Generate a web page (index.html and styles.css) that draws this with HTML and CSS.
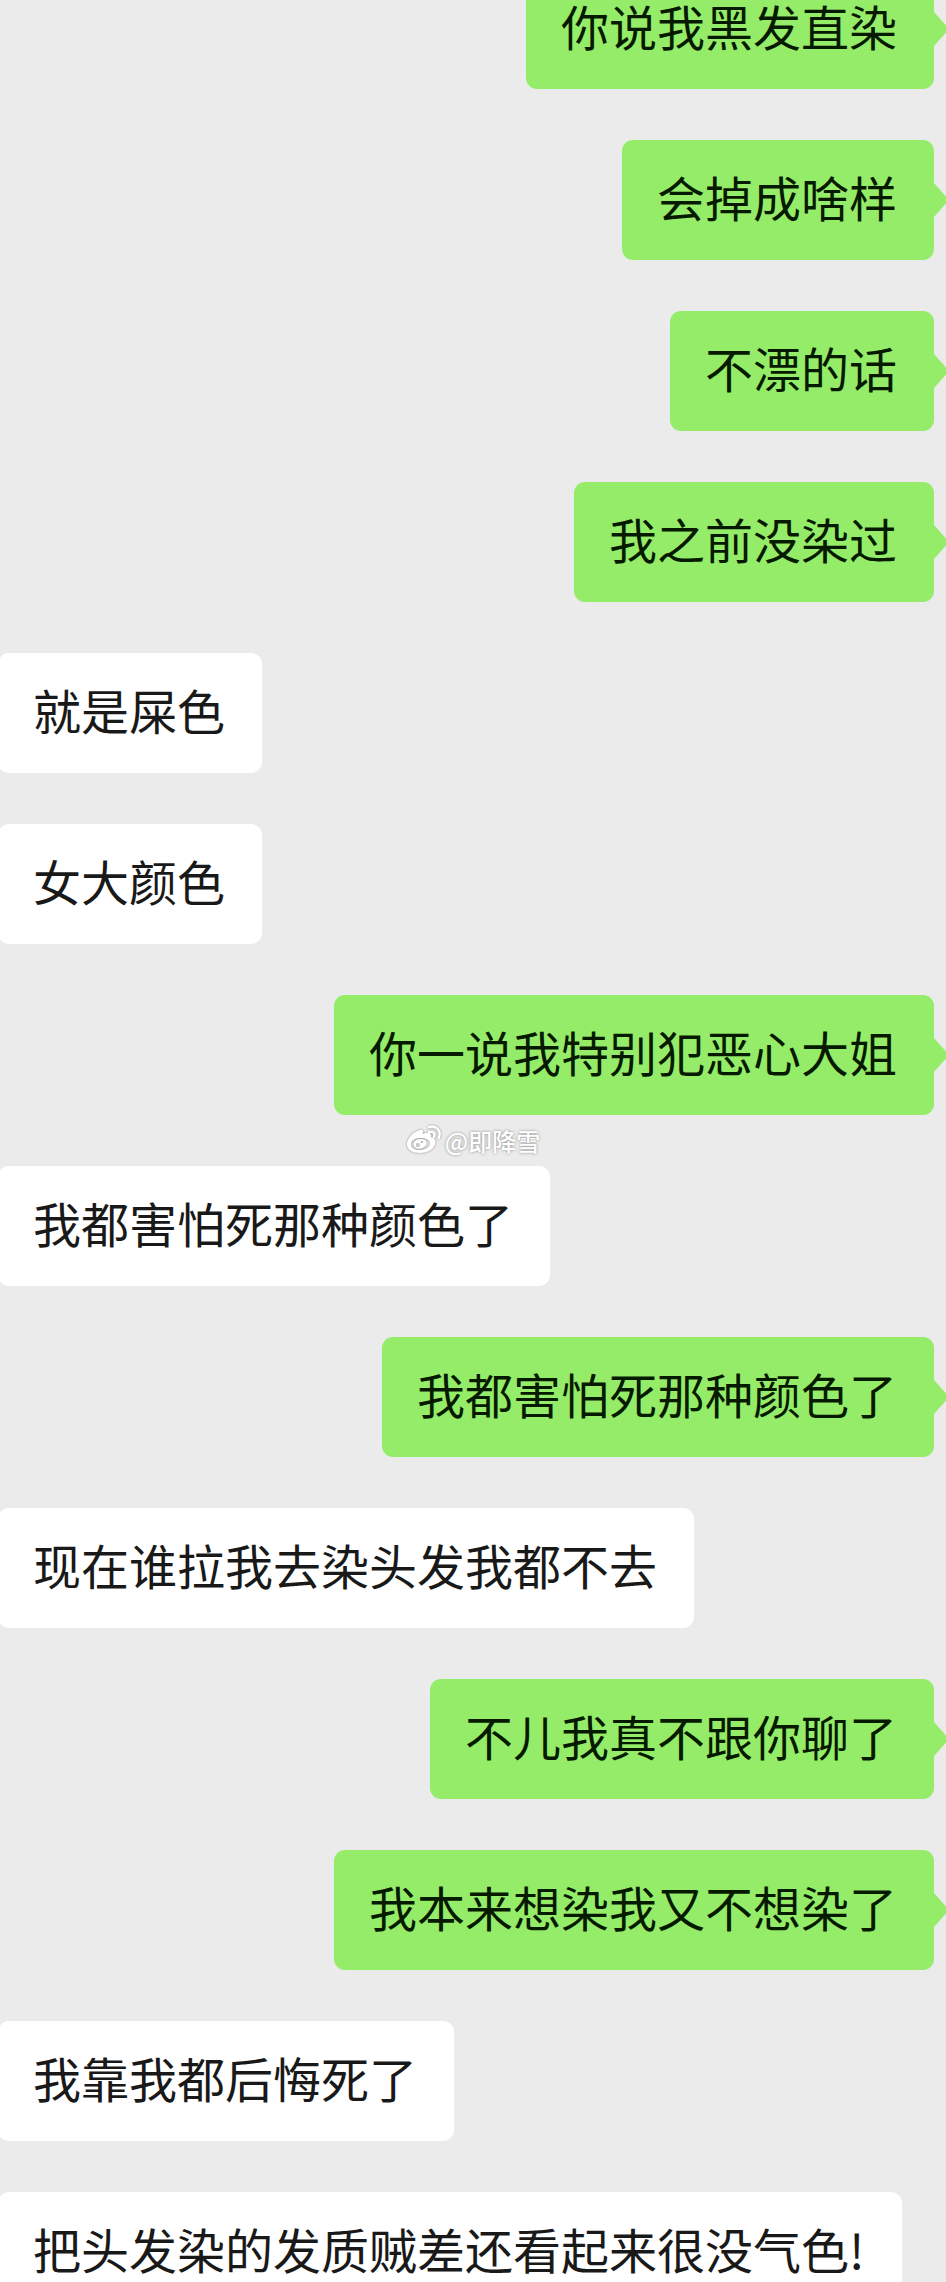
FILE: index.html
```html
<!DOCTYPE html>
<html lang="zh-CN">
<head>
  <meta charset="UTF-8" />
  <meta name="viewport" content="width=device-width, initial-scale=1.0" />
  <title>聊天记录</title>
  <link rel="stylesheet" href="styles.css">
</head>
<body>
  <main class="chat">
    <div class="message sent"><p class="bubble">你说我黑发直染</p></div>
    <div class="message sent"><p class="bubble">会掉成啥样</p></div>
    <div class="message sent"><p class="bubble">不漂的话</p></div>
    <div class="message sent"><p class="bubble">我之前没染过</p></div>
    <div class="message"><p class="bubble">就是屎色</p></div>
    <div class="message"><p class="bubble">女大颜色</p></div>
    <div class="message sent">
      <p class="bubble">你一说我特别犯恶心大姐</p>
      <div class="watermark">
        <svg class="watermark-logo" viewBox="0 0 36 30" aria-hidden="true">
          <path fill="#fff" fill-rule="evenodd" d="M14 5C16 4 18 5 17 9C21 7 26 7 25 12C29 13 31 16 29 20C27 25 21 28 14 28C7 28 1 25 1 19C1 14 8 6 14 5ZM14 13C9 13 5 16 5 19C5 23 9 25 14 25C20 25 24 22 24 18C24 15 20 13 14 13Z"/>
          <path fill="#fff" fill-rule="evenodd" d="M15 14C20 14 22 17 20 20C18 24 12 25 9 22C6 18 9 14 15 14ZM12 18A2 2 0 1 0 12 22A2 2 0 1 0 12 18ZM16 16A1 1 0 1 0 16 18A1 1 0 1 0 16 16Z"/>
          <path fill="none" stroke="#fff" stroke-width="2.4" stroke-linecap="round" d="M23 2C30 0 36 5 33 13M23 7C27 6 30 8 28 12"/>
        </svg>
        <span>@即降雪</span>
      </div>
    </div>
    <div class="message"><p class="bubble">我都害怕死那种颜色了</p></div>
    <div class="message sent"><p class="bubble">我都害怕死那种颜色了</p></div>
    <div class="message"><p class="bubble">现在谁拉我去染头发我都不去</p></div>
    <div class="message sent"><p class="bubble">不儿我真不跟你聊了</p></div>
    <div class="message sent"><p class="bubble">我本来想染我又不想染了</p></div>
    <div class="message"><p class="bubble">我靠我都后悔死了</p></div>
    <div class="message"><p class="bubble">把头发染的发质贼差还看起来很没气色!</p></div>
  </main>
</body>
</html>
```
FILE: styles.css
```css
* {
  box-sizing: border-box;
}

body {
  margin: 0;
  background: #ebebeb;
  color: #191919;
  font-family: "Noto Sans CJK SC", sans-serif;
}

/* the thread is scrolled, so its first and last bubbles are cut off */
.chat {
  display: flex;
  flex-direction: column;
  height: 100vh;
  overflow: hidden;
}

.message {
  position: relative;
  display: flex;
  flex-shrink: 0;
  margin-bottom: 51px;
  margin-left: -2px;
}

.message:first-child {
  margin-top: -31px;
}

.sent {
  justify-content: flex-end;
  margin-left: 0;
  padding-right: 12px;
}

.bubble {
  position: relative;
  margin: 0;
  padding: 24px 37px 32px 35px;
  border-radius: 11px;
  background: #fff;
  font-size: 48px;
  line-height: 64px;
}

.sent .bubble {
  background: #95ec69;
  color: #061a00;
}

.sent .bubble::after {
  content: "";
  position: absolute;
  top: 43px;
  left: 100%;
  border: 17px solid transparent;
  border-left: 15px solid #95ec69;
  border-right: 0;
}

.watermark {
  position: absolute;
  top: 128px;
  left: 50%;
  display: flex;
  align-items: center;
  gap: 3px;
  color: #fff;
  font-size: 24px;
  font-weight: 500;
  line-height: 36px;
  white-space: nowrap;
  text-shadow: 0 0 3px #888;
  transform: translateX(-50%);
}

.watermark-logo {
  width: 36px;
  height: 30px;
  margin-bottom: 2px;
  filter: drop-shadow(0 0 1px #888);
}
```
